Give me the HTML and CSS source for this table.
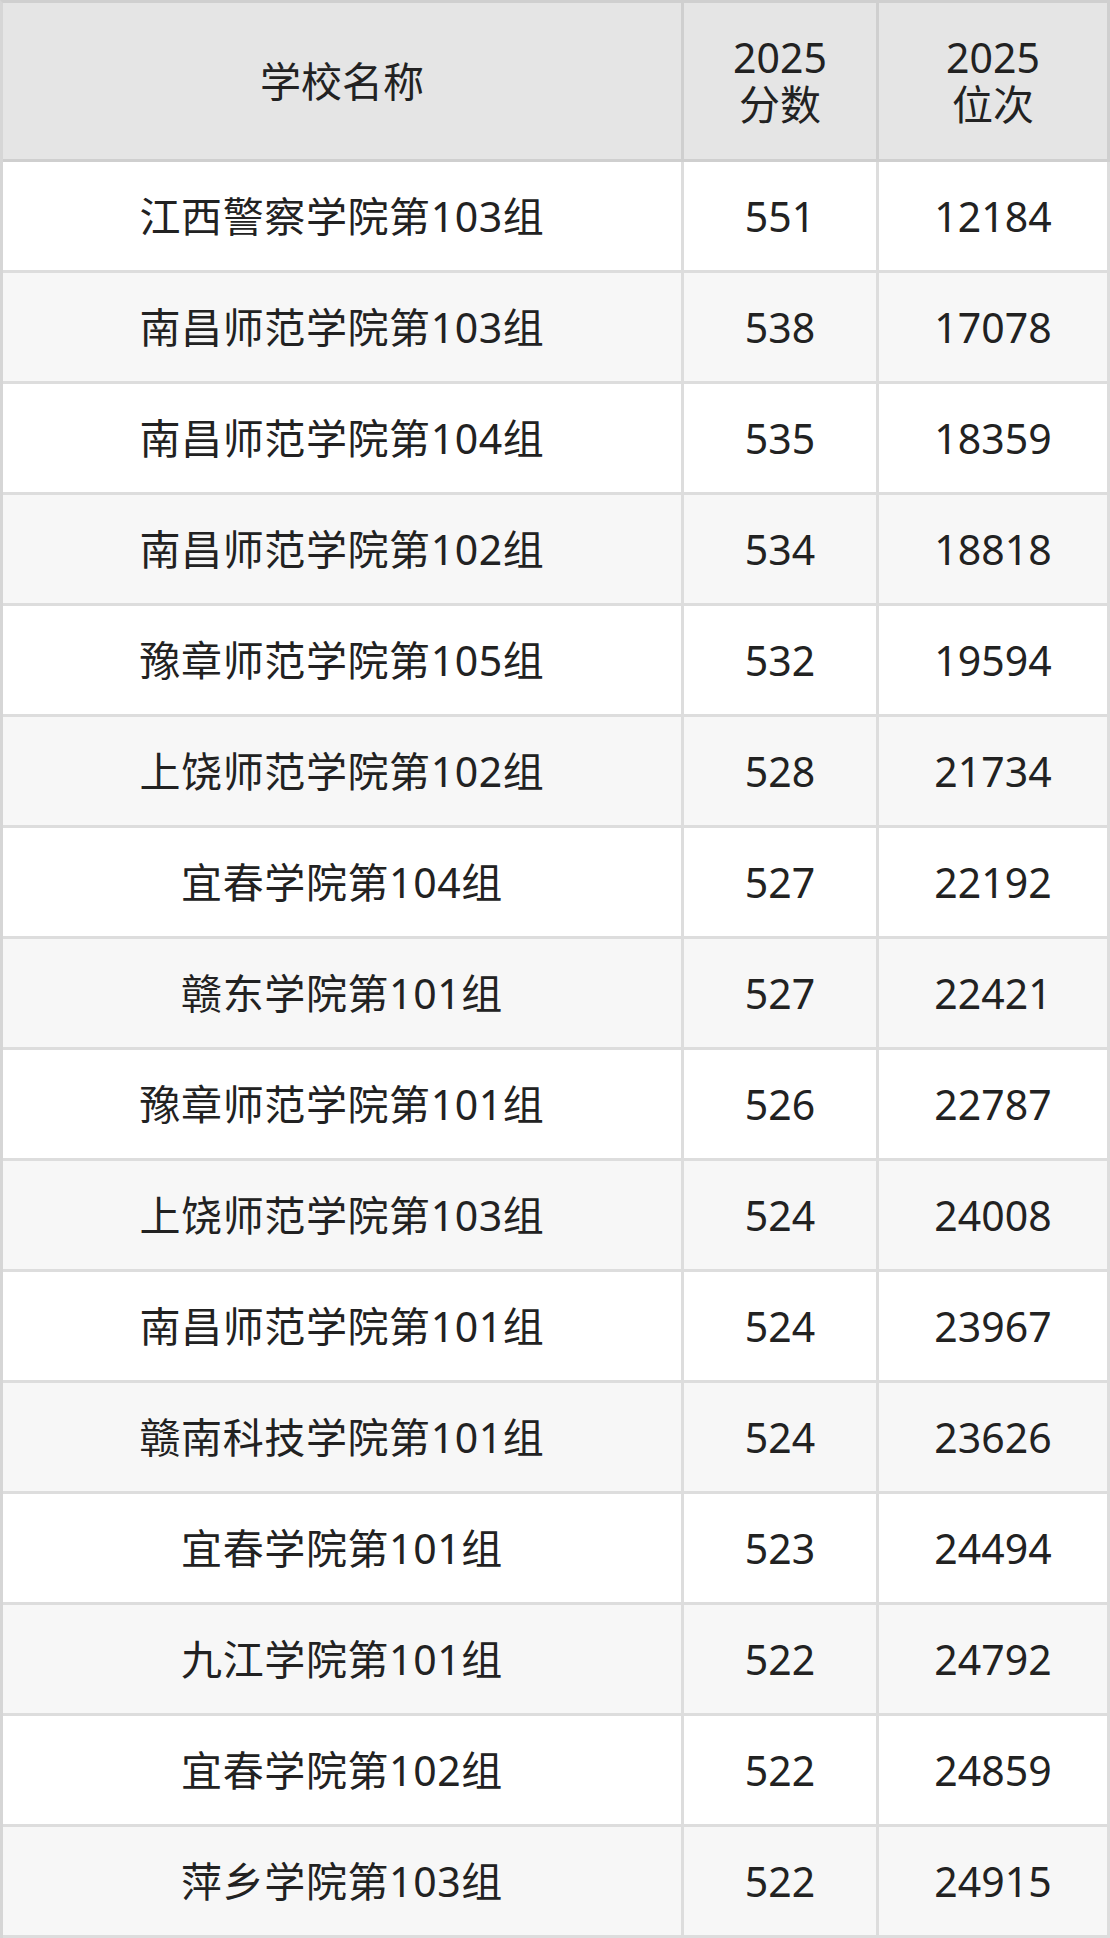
FILE: index.html
```html
<!DOCTYPE html>
<html lang="zh-CN">
<head>
<meta charset="utf-8">
<title>2025 分数位次</title>
<link rel="stylesheet" href="styles.css">
</head>
<body>
<table class="score-table">
  <colgroup>
    <col class="col-name">
    <col class="col-score">
    <col class="col-rank">
  </colgroup>
  <thead>
    <tr>
      <th>学校名称</th>
      <th><span class="head-line">2025</span><span class="head-line">分数</span></th>
      <th><span class="head-line">2025</span><span class="head-line">位次</span></th>
    </tr>
  </thead>
  <tbody>
    <tr><td class="name">江西警察学院第103组</td><td>551</td><td>12184</td></tr>
    <tr><td class="name">南昌师范学院第103组</td><td>538</td><td>17078</td></tr>
    <tr><td class="name">南昌师范学院第104组</td><td>535</td><td>18359</td></tr>
    <tr><td class="name">南昌师范学院第102组</td><td>534</td><td>18818</td></tr>
    <tr><td class="name">豫章师范学院第105组</td><td>532</td><td>19594</td></tr>
    <tr><td class="name">上饶师范学院第102组</td><td>528</td><td>21734</td></tr>
    <tr><td class="name">宜春学院第104组</td><td>527</td><td>22192</td></tr>
    <tr><td class="name">赣东学院第101组</td><td>527</td><td>22421</td></tr>
    <tr><td class="name">豫章师范学院第101组</td><td>526</td><td>22787</td></tr>
    <tr><td class="name">上饶师范学院第103组</td><td>524</td><td>24008</td></tr>
    <tr><td class="name">南昌师范学院第101组</td><td>524</td><td>23967</td></tr>
    <tr><td class="name">赣南科技学院第101组</td><td>524</td><td>23626</td></tr>
    <tr><td class="name">宜春学院第101组</td><td>523</td><td>24494</td></tr>
    <tr><td class="name">九江学院第101组</td><td>522</td><td>24792</td></tr>
    <tr><td class="name">宜春学院第102组</td><td>522</td><td>24859</td></tr>
    <tr><td class="name">萍乡学院第103组</td><td>522</td><td>24915</td></tr>
  </tbody>
</table>
</body>
</html>
```

FILE: styles.css
```css
html, body {
  margin: 0;
  padding: 0;
  background: #ffffff;
}

.score-table {
  width: 1110px;
  table-layout: fixed;
  border-collapse: separate;
  border-spacing: 0;
  border-top: 3px solid #cfcfcf;
  border-left: 3px solid #d6d6d6;
  font-family: "Noto Sans", "Open Sans", "Noto Sans CJK SC", sans-serif;
  font-size: 41px;
  color: #222222;
}

.col-name { width: 681px; }
.col-score { width: 195px; }
.col-rank { width: 231px; }

.score-table th,
.score-table td {
  box-sizing: border-box;
  padding: 0;
  text-align: center;
  vertical-align: middle;
  font-weight: normal;
}

.score-table th {
  height: 159px;
  line-height: 47px;
  background: #e5e5e5;
  border-right: 3px solid #cfcfcf;
  border-bottom: 3px solid #cfcfcf;
}

.head-line {
  display: block;
  height: 37px;
  line-height: 37px;
}

.head-line + .head-line {
  margin-top: 10px;
}

.score-table td {
  height: 111px;
  line-height: 47px;
  border-right: 3px solid #dddddd;
  border-bottom: 3px solid #dddddd;
}

.score-table td.name {
  letter-spacing: 0.6px;
}

.score-table tbody tr:nth-child(even) td {
  background: #f7f7f7;
}
```
